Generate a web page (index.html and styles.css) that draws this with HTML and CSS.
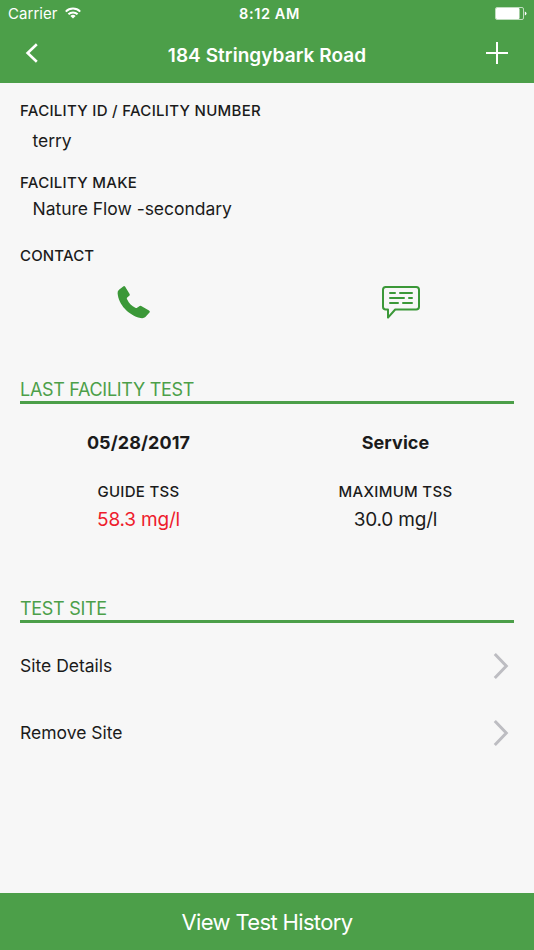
FILE: index.html
```html
<!DOCTYPE html>
<html lang="en">
<head>
<meta charset="utf-8">
<title>184 Stringybark Road</title>
<link rel="stylesheet" href="styles.css">
</head>
<body>
<header class="header">
  <div class="status">
    <div class="carrier"><span>Carrier</span>
      <svg class="wifi" width="16" height="12" viewBox="0 0 16 12" fill="none" stroke="#fff" stroke-width="2"><path d="M.8 4.6a10.2 10.2 0 0 1 14.4 0M3.4 7.3a6.5 6.5 0 0 1 9.2 0"/><path d="M8 11.6 5.4 9a3.7 3.7 0 0 1 5.2 0z" fill="#fff" stroke="none"/></svg>
    </div>
    <span class="clock">8:12 AM</span>
    <svg class="battery" width="33" height="13" viewBox="0 0 33 13"><rect x=".5" y=".5" width="28" height="12" rx="1.5" fill="none" stroke="#fff" stroke-opacity=".65"/><rect x="1" y="1" width="23.5" height="11" rx="1" fill="#fff"/><path d="M29.8 4.5q1.7.4 1.7 2t-1.7 2z" fill="#fff"/></svg>
  </div>
  <nav class="nav">
    <svg class="back" width="14" height="20" viewBox="0 0 14 20" fill="none" stroke="#fff" stroke-width="2.6"><path d="M11.8 1.2 2.6 10l9.2 8.8"/></svg>
    <h1 class="title">184 Stringybark Road</h1>
    <svg class="plus" width="22" height="22" viewBox="0 0 22 22" stroke="#fff" stroke-width="2"><path d="M0 11h22M11 0v22"/></svg>
  </nav>
</header>
<main class="content">
  <dl class="facts">
    <dt class="label">FACILITY ID / FACILITY NUMBER</dt>
    <dd class="value first">terry</dd>
    <dt class="label make">FACILITY MAKE</dt>
    <dd class="value">Nature Flow -secondary</dd>
  </dl>
  <h3 class="label contact">CONTACT</h3>
  <div class="pair actions">
    <svg class="phone" width="34" height="34" viewBox="0 0 34 34" fill="#3b9838"><path d="M6.2 1.4Q7.3.5 8.2 1.7L12.6 9Q13.2 10 12.3 10.8L10.2 12.4C9.6 13 9.8 13.6 10.2 14.4C12 18.2 14.8 21 18.3 22.8C19.2 23.3 19.8 23.2 20.4 22.5L22 21.4Q23 20.5 24.2 21.1L32 25.4Q33.4 26.2 32.7 27.3L28.4 32Q26.8 33.6 23.5 33C11.5 30.5 1.5 19.5.6 8.3Q.4 6.1 2 4.8z"/></svg>
    <svg class="chat" width="40" height="36" viewBox="0 0 40 36" fill="none" stroke="#3b9838" stroke-width="2" stroke-linejoin="round" stroke-linecap="round"><path d="M4.7 2H35.2Q38 2 38 4.8V21.7Q38 24.5 35.2 24.5H14.2L7 32.6V24.5H4.7Q2 24.5 2 21.7V4.8Q2 2 4.7 2z"/><path d="M9 8.1h5M19 8.1h12M9 13.1h14M28 13.1h3M9 18h8M22 18h9"/></svg>
  </div>
  <h2 class="section-title">LAST FACILITY TEST</h2>
  <section class="pair results">
    <div class="result"><strong class="head">05/28/2017</strong><span class="label">GUIDE TSS</span><span class="reading alert">58.3 mg/l</span></div>
    <div class="result"><strong class="head">Service</strong><span class="label">MAXIMUM TSS</span><span class="reading">30.0 mg/l</span></div>
  </section>
  <h2 class="section-title site">TEST SITE</h2>
  <ul class="menu">
    <li class="row"><span>Site Details</span><svg width="16" height="28" viewBox="0 0 16 28" fill="none" stroke="#bdbdc2" stroke-width="3"><path d="M1.8 2 13.3 14 1.8 26"/></svg></li>
    <li class="row"><span>Remove Site</span><svg width="16" height="28" viewBox="0 0 16 28" fill="none" stroke="#bdbdc2" stroke-width="3"><path d="M1.8 2 13.3 14 1.8 26"/></svg></li>
  </ul>
</main>
<footer class="footer">View Test History</footer>
</body>
</html>
```
FILE: styles.css
```css
* { box-sizing: border-box; margin: 0; padding: 0; }
body { height: 950px; display: flex; flex-direction: column; background: #f7f7f7; color: #1b1b1b; font-family: Inter, "Liberation Sans", sans-serif; overflow: hidden; }
svg { display: block; flex: none; }
.header { height: 83px; flex: none; background: #4c9f49; color: #fff; }
.status { height: 28px; padding: 0 6px 0 8px; display: grid; grid-template-columns: 1fr auto 1fr; align-items: center; font-size: 15px; line-height: 28px; }
.carrier { display: flex; align-items: center; gap: 7px; letter-spacing: .05px; }
.wifi { margin-top: -3px; }
.clock { font-weight: 600; font-size: 14.5px; letter-spacing: .6px; padding-left: 3px; }
.battery { justify-self: end; margin-top: -1px; }
.nav { height: 54px; padding: 0 26px 0 25px; display: flex; align-items: center; justify-content: space-between; }
.back, .plus { margin-top: -4px; }
.title { font-size: 19px; font-weight: 600; line-height: 54px; margin: 2px 0 0 9px; letter-spacing: .06px; }
.content { flex: 1; padding: 18px 20px 0; }
.label { display: block; font-size: 15px; font-weight: 470; line-height: 20px; letter-spacing: .29px; white-space: nowrap; }
.value { padding-left: 12.5px; font-size: 17.5px; line-height: 24px; letter-spacing: -.03px; }
.first { margin-top: 8px; }
.make { margin-top: 20px; }
.make + .value { margin-top: 4px; }
.contact { margin-top: 25px; letter-spacing: .15px; }
.pair { display: grid; grid-template-columns: 1fr 1fr; margin: 0 -10px; }
.actions { height: 36px; margin-top: 19px; justify-items: center; }
.phone { margin-left: -9px; }
.chat { margin-left: 10px; }
.section-title { height: 26px; margin: 57px 0 0; border-bottom: 3px solid #4c9f49; color: #4c9f49; font-size: 18px; font-weight: 400; line-height: 24px; letter-spacing: -.3px; }
.results { margin-top: 27px; text-align: center; }
.result { display: flex; flex-direction: column; }
.result .label { margin-top: 27px; }
.head { font-size: 18px; font-weight: 700; line-height: 24px; letter-spacing: .08px; }
.reading { font-size: 19px; line-height: 24px; margin-top: 6px; letter-spacing: -.2px; }
.alert { color: #ee1c2d; }
.site { margin-top: 65px; }
.menu { list-style: none; margin-top: 9px; }
.row { height: 67px; display: flex; align-items: center; justify-content: space-between; padding-right: 5px; font-size: 17.5px; }
.footer { height: 57px; flex: none; background: #4c9f49; color: #fff; font-size: 22px; line-height: 58px; letter-spacing: -.65px; text-align: center; }
```
